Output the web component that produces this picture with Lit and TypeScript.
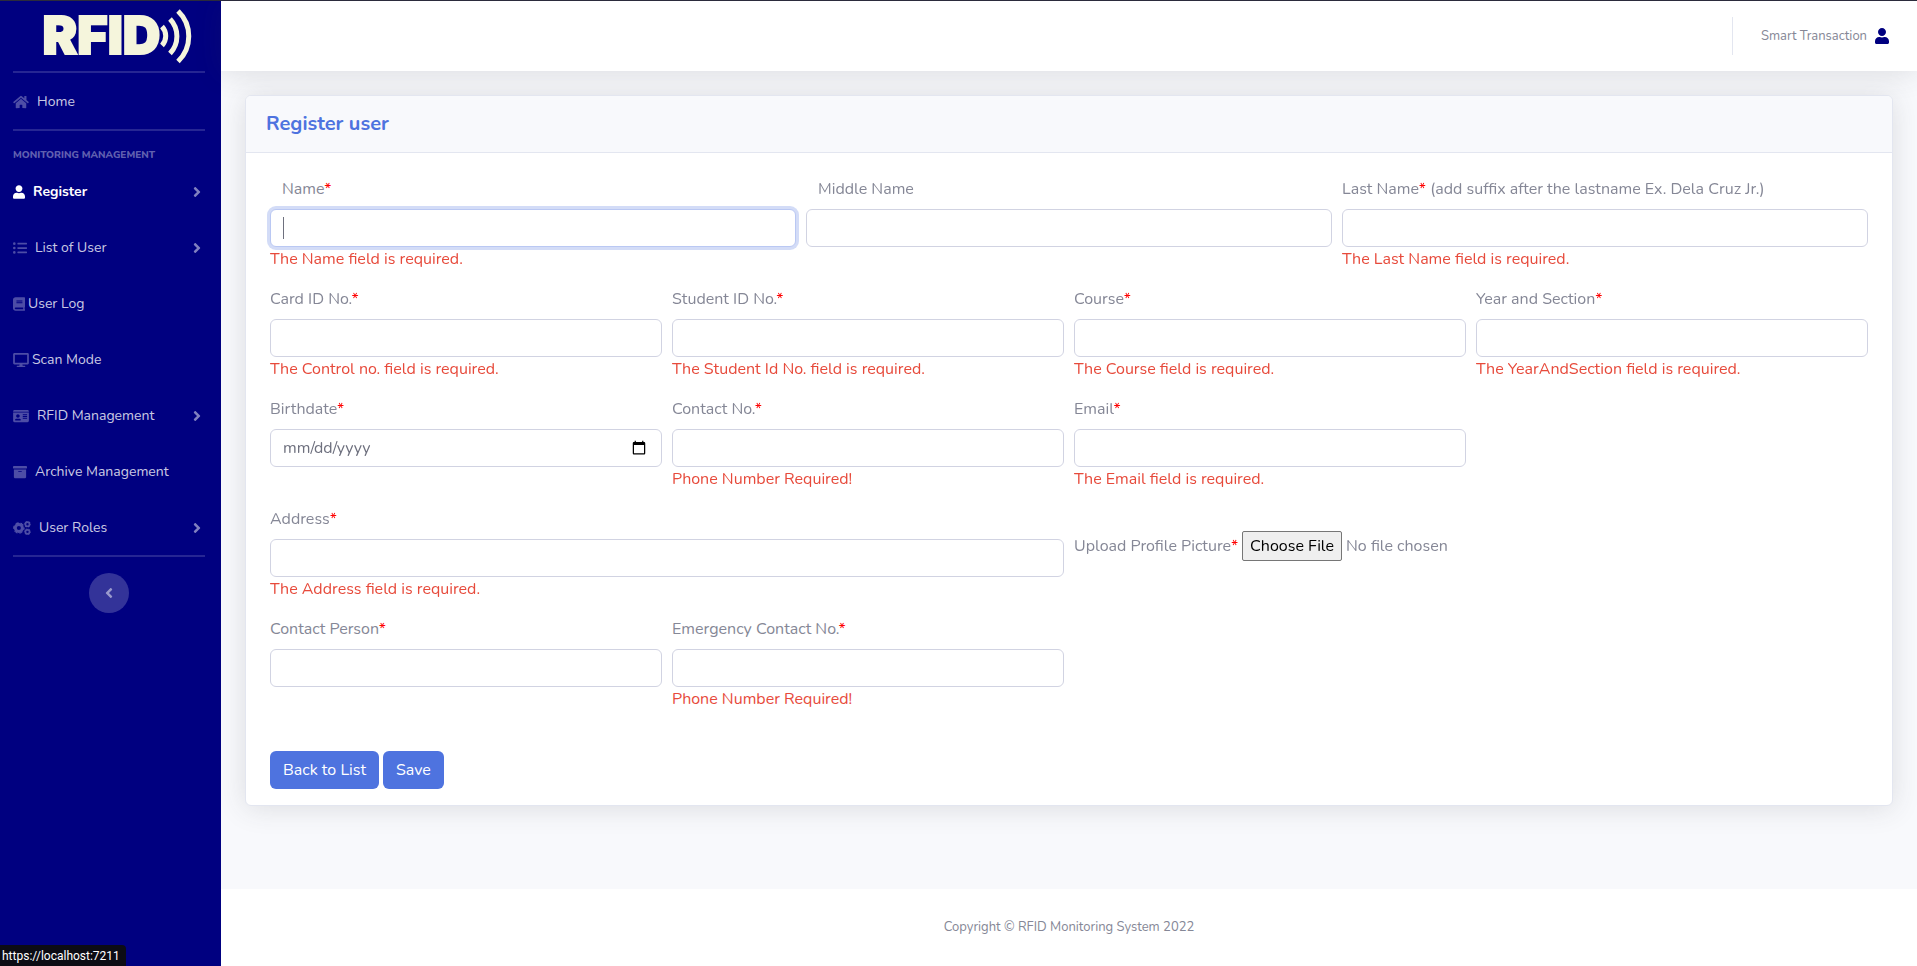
import { LitElement, html, css, svg, nothing } from "lit";
import { customElement, property } from "lit/decorators.js";
import { classMap } from "lit/directives/class-map.js";

type Glyph = { w: number; body: unknown };

const path = (w: number, d: string): Glyph => ({ w, body: svg`<path fill="currentColor" d=${d} />` });

const gear = (cx: number, cy: number, r: number) => svg`
  <circle cx=${cx} cy=${cy} r=${r * 0.61} fill="none" stroke="currentColor" stroke-width=${r * 0.5} />
  <circle cx=${cx} cy=${cy} r=${r * 0.93} fill="none" stroke="currentColor" stroke-width=${r * 0.16}
    pathLength="12" stroke-dasharray="1.2 0.8" stroke-dashoffset="0.5" />`;

const GLYPHS: Record<string, Glyph> = {
  home: path(576, "M280.37 148.26L96 300.11V464a16 16 0 0 0 16 16l112.06-.29a16 16 0 0 0 15.92-16V368a16 16 0 0 1 16-16h64a16 16 0 0 1 16 16v95.64a16 16 0 0 0 16 16.05L464 480a16 16 0 0 0 16-16V300L295.67 148.26a12.19 12.19 0 0 0-15.3 0zM571.6 251.47L488 182.56V44.05a12 12 0 0 0-12-12h-56a12 12 0 0 0-12 12v72.61L318.47 43a48 48 0 0 0-61 0L4.34 251.47a12 12 0 0 0-1.6 16.9l25.5 31A12 12 0 0 0 45.15 301l235.22-193.74a12.19 12.19 0 0 1 15.3 0L530.9 301a12 12 0 0 0 16.9-1.6l25.5-31a12 12 0 0 0-1.7-16.93z"),
  user: path(448, "M224 256c70.7 0 128-57.3 128-128S294.7 0 224 0 96 57.3 96 128s57.3 128 128 128zm89.6 32h-16.7c-22.2 10.2-46.9 16-72.9 16s-50.6-5.8-72.9-16h-16.7C60.2 288 0 348.2 0 422.4V464c0 26.5 21.5 48 48 48h352c26.5 0 48-21.5 48-48v-41.6c0-74.2-60.2-134.4-134.4-134.4z"),
  list: path(512, "M48 48a48 48 0 1 0 48 48 48 48 0 0 0-48-48zm0 160a48 48 0 1 0 48 48 48 48 0 0 0-48-48zm0 160a48 48 0 1 0 48 48 48 48 0 0 0-48-48zm448 16H176a16 16 0 0 0-16 16v32a16 16 0 0 0 16 16h320a16 16 0 0 0 16-16v-32a16 16 0 0 0-16-16zm0-320H176a16 16 0 0 0-16 16v32a16 16 0 0 0 16 16h320a16 16 0 0 0 16-16V80a16 16 0 0 0-16-16zm0 160H176a16 16 0 0 0-16 16v32a16 16 0 0 0 16 16h320a16 16 0 0 0 16-16v-32a16 16 0 0 0-16-16z"),
  book: path(448, "M448 360V24c0-13.3-10.7-24-24-24H96C43 0 0 43 0 96v320c0 53 43 96 96 96h328c13.3 0 24-10.7 24-24v-16c0-7.5-3.5-14.3-8.9-18.7-4.2-15.4-4.2-59.3 0-74.7 5.4-4.3 8.9-11.1 8.9-18.6zM128 134c0-3.3 2.7-6 6-6h212c3.3 0 6 2.7 6 6v20c0 3.3-2.7 6-6 6H134c-3.3 0-6-2.7-6-6v-20zm0 64c0-3.3 2.7-6 6-6h212c3.3 0 6 2.7 6 6v20c0 3.3-2.7 6-6 6H134c-3.3 0-6-2.7-6-6v-20zm253.4 250H96c-17.7 0-32-14.3-32-32 0-17.6 14.4-32 32-32h285.4c-1.9 17.1-1.9 46.9 0 64z"),
  desktop: path(576, "M528 0H48C21.5 0 0 21.5 0 48v320c0 26.5 21.5 48 48 48h192l-16 48h-72c-13.3 0-24 10.7-24 24s10.7 24 24 24h272c13.3 0 24-10.7 24-24s-10.7-24-24-24h-72l-16-48h192c26.5 0 48-21.5 48-48V48c0-26.5-21.5-48-48-48zm-16 352H64V64h448v288z"),
  card: path(576, "M528 32H48C21.5 32 0 53.5 0 80v16h576V80c0-26.5-21.5-48-48-48zM0 432c0 26.5 21.5 48 48 48h480c26.5 0 48-21.5 48-48V128H0v304zm352-232c0-4.4 3.6-8 8-8h144c4.4 0 8 3.6 8 8v16c0 4.4-3.6 8-8 8H360c-4.4 0-8-3.6-8-8v-16zm0 64c0-4.4 3.6-8 8-8h144c4.4 0 8 3.6 8 8v16c0 4.4-3.6 8-8 8H360c-4.4 0-8-3.6-8-8v-16zm0 64c0-4.4 3.6-8 8-8h144c4.4 0 8 3.6 8 8v16c0 4.4-3.6 8-8 8H360c-4.4 0-8-3.6-8-8v-16zM176 192c35.3 0 64 28.7 64 64s-28.7 64-64 64-64-28.7-64-64 28.7-64 64-64zM67.1 396.2C75.5 370.5 99.6 352 128 352h8.2c12.3 5.1 25.7 8 39.8 8s27.6-2.9 39.8-8h8.2c28.4 0 52.5 18.5 60.9 44.2 3.2 9.9-5.2 19.8-15.6 19.8H82.7c-10.4 0-18.8-10-15.6-19.8z"),
  archive: path(512, "M32 448c0 17.7 14.3 32 32 32h384c17.7 0 32-14.3 32-32V160H32v288zm160-212c0-6.6 5.4-12 12-12h104c6.6 0 12 5.4 12 12v8c0 6.6-5.4 12-12 12H204c-6.6 0-12-5.4-12-12v-8zM480 32H32C14.3 32 0 46.3 0 64v48c0 8.8 7.2 16 16 16h480c8.8 0 16-7.2 16-16V64c0-17.7-14.3-32-32-32z"),
  cogs: { w: 640, body: svg`${gear(205, 256, 210)}${gear(520, 118, 122)}${gear(520, 396, 122)}` },
  right: path(256, "M224.3 273l-136 136c-9.4 9.4-24.6 9.4-33.9 0l-22.6-22.6c-9.4-9.4-9.4-24.6 0-33.9l96.4-96.4-96.4-96.4c-9.4-9.4-9.4-24.6 0-33.9L54.3 103c9.4-9.4 24.6-9.4 33.9 0l136 136c9.5 9.4 9.5 24.6.1 34z"),
  left: path(256, "M31.7 239l136-136c9.4-9.4 24.6-9.4 33.9 0l22.6 22.6c9.4 9.4 9.4 24.6 0 33.9L127.9 256l96.4 96.4c9.4 9.4 9.4 24.6 0 33.9L201.7 409c-9.4 9.4-24.6 9.4-33.9 0l-136-136c-9.5-9.4-9.5-24.6-.1-34z"),
};

@customElement("fa-icon")
class FaIcon extends LitElement {
  @property() name = "";
  @property({ type: Number }) size = 14;

  static styles = css`
    :host { display: inline-flex; flex: none; }
    svg { display: block; }
  `;

  render() {
    const glyph = GLYPHS[this.name];
    return html`<svg width=${Math.round((glyph.w / 512) * this.size)} height=${this.size}
      viewBox="0 0 ${glyph.w} 512" aria-hidden="true">${glyph.body}</svg>`;
  }
}

type NavItem = { icon: string; text: string; more?: boolean; active?: boolean; tight?: boolean };

const NAV: NavItem[] = [
  { icon: "user", text: "Register", more: true, active: true },
  { icon: "list", text: "List of User", more: true },
  { icon: "book", text: "User Log", tight: true },
  { icon: "desktop", text: "Scan Mode", tight: true },
  { icon: "card", text: "RFID Management", more: true },
  { icon: "archive", text: "Archive Management" },
  { icon: "cogs", text: "User Roles", more: true },
];

@customElement("side-nav")
class SideNav extends LitElement {
  static styles = css`
    :host {
      display: flex;
      flex-direction: column;
      flex: none;
      width: 221px;
      background: #000080;
    }
    .brand {
      display: flex;
      align-items: center;
      justify-content: center;
      height: 70px;
      padding-left: 14px;
      color: #f5f5dc;
      text-decoration: none;
      font: 900 52px/70px Inter, sans-serif;
      -webkit-text-stroke: 2px #f5f5dc;
    }
    .brand svg { display: block; }
    hr {
      width: 192px;
      height: 2px;
      margin: 0 0 0 13px;
      border: 0;
      background: rgba(255, 255, 255, 0.15);
    }
    .link {
      display: flex;
      align-items: center;
      gap: 8px;
      box-sizing: border-box;
      height: 56px;
      padding: 1px 20px 0 13px;
      color: rgba(255, 255, 255, 0.8);
      text-decoration: none;
      font-size: 14px;
    }
    .link fa-icon { color: rgba(255, 255, 255, 0.3); }
    .tight { gap: 3px; }
    .active { color: #fff; font-weight: 700; }
    .active fa-icon { color: #fff; }
    .link .more { margin-left: auto; color: rgba(255, 255, 255, 0.5); }
    .heading {
      margin: 0;
      padding: 16px 0 0 13px;
      color: rgba(255, 255, 255, 0.4);
      font-size: 10px;
      font-weight: 800;
      line-height: 16px;
      text-transform: uppercase;
    }
    .toggle {
      display: flex;
      align-items: center;
      justify-content: center;
      width: 40px;
      height: 40px;
      margin: 16px 0 0 89px;
      padding: 0;
      border: 0;
      border-radius: 50%;
      background: rgba(255, 255, 255, 0.2);
      color: rgba(255, 255, 255, 0.5);
    }
  `;

  private link(item: NavItem) {
    return html`<a class=${classMap({ link: true, active: !!item.active, tight: !!item.tight })} href="#">
      <fa-icon name=${item.icon}></fa-icon><span>${item.text}</span>
      ${item.more ? html`<fa-icon class="more" name="right" size="16"></fa-icon>` : nothing}
    </a>`;
  }

  render() {
    return html`
      <a class="brand" href="#">
        <span>RFID</span>
        <svg width="32" height="56" viewBox="0 0 32 56" fill="none" stroke="#f5f5dc" stroke-width="5">
          <path d="M2 18.500A14 14 0 0 1 2 37.500" />
          <path d="M10 11A25 25 0 0 1 10 45.500" />
          <path d="M18 3A35 35 0 0 1 18 53.500" />
        </svg>
      </a>
      <hr />
      ${this.link({ icon: "home", text: "Home" })}
      <hr />
      <h2 class="heading">Monitoring Management</h2>
      ${NAV.map((item) => this.link(item))}
      <hr />
      <button class="toggle" aria-label="Collapse sidebar"><fa-icon name="left" size="16"></fa-icon></button>
    `;
  }
}

type Field = {
  id: string;
  label: string;
  required?: boolean;
  hint?: string;
  error?: string;
  type?: string;
  indent?: boolean;
  newRow?: boolean;
  span: number;
};

const FIELDS: Field[] = [
  { id: "name", label: "Name", required: true, error: "The Name field is required.", indent: true, span: 4 },
  { id: "middle", label: "Middle Name", indent: true, span: 4 },
  { id: "last", label: "Last Name", required: true, hint: " (add suffix after the lastname Ex. Dela Cruz Jr.)", error: "The Last Name field is required.", span: 4 },
  { id: "card", label: "Card ID No.", required: true, error: "The Control no. field is required.", span: 3 },
  { id: "student", label: "Student ID No.", required: true, error: "The Student Id No. field is required.", span: 3 },
  { id: "course", label: "Course", required: true, error: "The Course field is required.", span: 3 },
  { id: "section", label: "Year and Section", required: true, error: "The YearAndSection field is required.", span: 3 },
  { id: "birth", label: "Birthdate", required: true, type: "date", span: 3 },
  { id: "contact", label: "Contact No.", required: true, error: "Phone Number Required!", span: 3 },
  { id: "email", label: "Email", required: true, error: "The Email field is required.", span: 3 },
  { id: "address", label: "Address", required: true, error: "The Address field is required.", newRow: true, span: 6 },
  { id: "picture", label: "Upload Profile Picture", required: true, type: "file", span: 6 },
  { id: "person", label: "Contact Person", required: true, span: 3 },
  { id: "emergency", label: "Emergency Contact No.", required: true, error: "Phone Number Required!", span: 3 },
];

@customElement("register-form")
class RegisterForm extends LitElement {
  static styles = css`
    :host { display: block; }
    .card {
      border: 1px solid #e3e6f0;
      border-radius: 6px;
      background: #fff;
      box-shadow: 0 2px 28px rgba(58, 59, 69, 0.15);
    }
    .title {
      margin: 0;
      padding: 16px 20px;
      border-bottom: 1px solid #e3e6f0;
      border-radius: 5px 5px 0 0;
      background: #f8f9fc;
      color: #4e73df;
      font-size: 20px;
      font-weight: 700;
      line-height: 24px;
    }
    form { padding: 24px 24px 16px; }
    .grid {
      display: grid;
      grid-template-columns: repeat(12, minmax(0, 1fr));
      column-gap: 10px;
      row-gap: 16px;
    }
    .s3 { grid-column: span 3; }
    .s4 { grid-column: span 4; }
    .s6 { grid-column: span 6; }
    .row-start { grid-column-start: 1; grid-column-end: span 6; }
    .field { min-height: 94px; }
    .label { display: block; margin-bottom: 8px; }
    .indent { padding-left: 12px; }
    .star { color: #f00; }
    .box {
      display: block;
      box-sizing: border-box;
      width: 100%;
      height: 38px;
      padding: 6px 12px;
      border: 1px solid #d1d3e2;
      border-radius: 6px;
      background: #fff;
      color: #6e707e;
      font: inherit;
    }
    .box::-webkit-datetime-edit-month-field,
    .box::-webkit-datetime-edit-day-field,
    .box::-webkit-datetime-edit-year-field { padding: 0; }
    .box::-webkit-datetime-edit-fields-wrapper { padding: 0; }
    .box:focus {
      border-color: #bac8f3;
      outline: 0;
      box-shadow: 0 0 0 3px rgba(78, 115, 223, 0.25);
    }
    /* A steady, taller caret while the focused box is still empty. */
    .box:focus:placeholder-shown {
      background: linear-gradient(#6e707e, #6e707e) 12px center / 1px 22px no-repeat #fff;
      caret-color: transparent;
    }
    .error { display: block; color: #e74a3b; }
    .upload {
      display: flex;
      align-items: center;
      gap: 4px;
      height: 30px;
      padding-top: 24px;
    }
    .file { font: inherit; color: inherit; }
    .file::file-selector-button {
      box-sizing: border-box;
      height: 30px;
      padding: 1px 7px;
      border: 1px solid #767676;
      border-radius: 2px;
      background: #efefef;
      color: #000;
      font: inherit;
    }
    .actions { display: flex; gap: 4px; margin-top: 40px; }
    .btn {
      height: 38px;
      padding: 0 13px;
      border: 0;
      border-radius: 6px;
      background: #4e73df;
      color: #fff;
      font: inherit;
      line-height: 38px;
      text-decoration: none;
    }
  `;

  firstUpdated() {
    this.renderRoot.querySelector<HTMLInputElement>("#name")?.focus();
  }

  private star(field: Field) {
    return field.required ? html`<span class="star">*</span>` : nothing;
  }

  private field(field: Field) {
    if (field.type === "file") {
      return html`<div class="field s6"><div class="upload">
        <label for=${field.id}>${field.label}${this.star(field)}</label>
        <input class="file" id=${field.id} type="file" />
      </div></div>`;
    }
    return html`<div class=${classMap({ field: true, [`s${field.span}`]: true, "row-start": !!field.newRow })}>
      <label class=${classMap({ label: true, indent: !!field.indent })} for=${field.id}
        >${field.label}${this.star(field)}${field.hint ?? nothing}</label>
      <input class="box" id=${field.id} type=${field.type ?? "text"} placeholder=" " />
      ${field.error ? html`<span class="error">${field.error}</span>` : nothing}
    </div>`;
  }

  render() {
    return html`<section class="card">
      <h1 class="title">Register user</h1>
      <form novalidate>
        <div class="grid">${FIELDS.map((field) => this.field(field))}</div>
        <div class="actions">
          <a class="btn" href="#">Back to List</a>
          <button class="btn" type="button">Save</button>
        </div>
      </form>
    </section>`;
  }
}

@customElement("app-root")
class AppRoot extends LitElement {
  static styles = css`
    :host {
      display: flex;
      box-sizing: border-box;
      min-height: 100vh;
      border-top: 1px solid #2b2b3c;
      background: #f8f9fc;
      color: #858796;
      font: 400 16px/24px Nunito, "Noto Sans", sans-serif;
    }
    .main { display: flex; flex-direction: column; flex: 1; min-width: 0; }
    .topbar {
      display: flex;
      align-items: center;
      justify-content: flex-end;
      height: 70px;
      padding-right: 28px;
      background: #fff;
      box-shadow: 0 2px 28px rgba(58, 59, 69, 0.15);
      font-size: 13px;
    }
    .rule { width: 1px; height: 38px; margin-right: 28px; background: #e3e6f0; }
    .account { display: flex; align-items: center; gap: 8px; color: inherit; text-decoration: none; }
    .account fa-icon { color: #000080; }
    .content { flex: 1; padding: 24px; }
    footer {
      padding: 26px 0 27px;
      background: #fff;
      font-size: 13px;
      text-align: center;
    }
    .status {
      position: fixed;
      left: 0;
      bottom: 0;
      padding: 1px 6px 0 2px;
      border-top-right-radius: 4px;
      background: #0c0c14;
      color: #fff;
      font: 12px/20px Roboto, sans-serif;
    }
  `;

  render() {
    return html`
      <side-nav></side-nav>
      <div class="main">
        <header class="topbar">
          <span class="rule"></span>
          <a class="account" href="#"><span>Smart Transaction</span><fa-icon name="user" size="16"></fa-icon></a>
        </header>
        <main class="content"><register-form></register-form></main>
        <footer>Copyright © RFID Monitoring System 2022</footer>
      </div>
      <div class="status">https://localhost:7211</div>
    `;
  }
}
